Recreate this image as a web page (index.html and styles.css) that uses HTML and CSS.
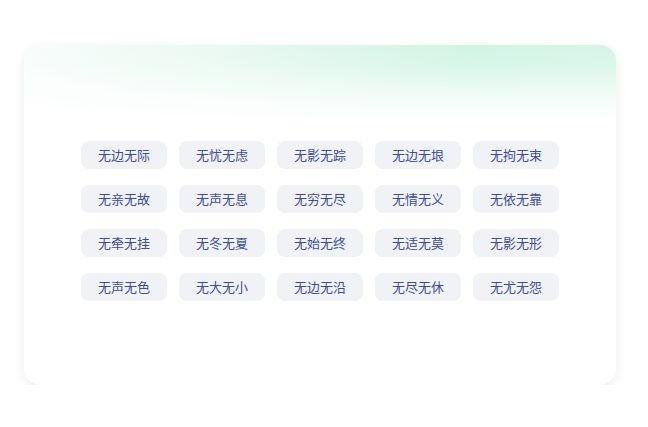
FILE: index.html
```html
<!DOCTYPE html>
<html lang="zh">
<head>
<meta charset="utf-8">
<link rel="stylesheet" href="styles.css">
</head>
<body>
<div class="card">
  <div class="tags">
    <span class="tag">无边无际</span>
    <span class="tag">无忧无虑</span>
    <span class="tag">无影无踪</span>
    <span class="tag">无边无垠</span>
    <span class="tag">无拘无束</span>
    <span class="tag">无亲无故</span>
    <span class="tag">无声无息</span>
    <span class="tag">无穷无尽</span>
    <span class="tag">无情无义</span>
    <span class="tag">无依无靠</span>
    <span class="tag">无牵无挂</span>
    <span class="tag">无冬无夏</span>
    <span class="tag">无始无终</span>
    <span class="tag">无适无莫</span>
    <span class="tag">无影无形</span>
    <span class="tag">无声无色</span>
    <span class="tag">无大无小</span>
    <span class="tag">无边无沿</span>
    <span class="tag">无尽无休</span>
    <span class="tag">无尤无怨</span>
  </div>
</div>
</body>
</html>
```
FILE: styles.css
```css
html, body {
  margin: 0;
  padding: 0;
  background: #ffffff;
}
body {
  padding: 45px 0 0 24px;
  font-family: "Noto Sans CJK SC", "Noto Sans", sans-serif;
}
.card {
  width: 592px;
  height: 340px;
  box-sizing: border-box;
  border-radius: 16px;
  box-shadow: 0 3px 12px rgba(0, 0, 0, 0.08);
  padding-top: 96px;
  background:
    linear-gradient(180deg, rgba(255,255,255,0) 0px, rgba(255,255,255,0.15) 20px, rgba(255,255,255,0.75) 55px, #ffffff 76px),
    linear-gradient(90deg, #f8fdfb 0%, #ebf9f2 30%, #dcf6ea 55%, #d1f4e4 75%, #d6f5e7 100%),
    #ffffff;
}
.tags {
  display: grid;
  grid-template-columns: repeat(5, 86px);
  column-gap: 12px;
  row-gap: 16px;
  justify-content: center;
}
.tag {
  height: 28px;
  line-height: 28px;
  border-radius: 8px;
  background: #f1f2f6;
  color: #3e4c9e;
  font-size: 13px;
  text-align: center;
}
```
